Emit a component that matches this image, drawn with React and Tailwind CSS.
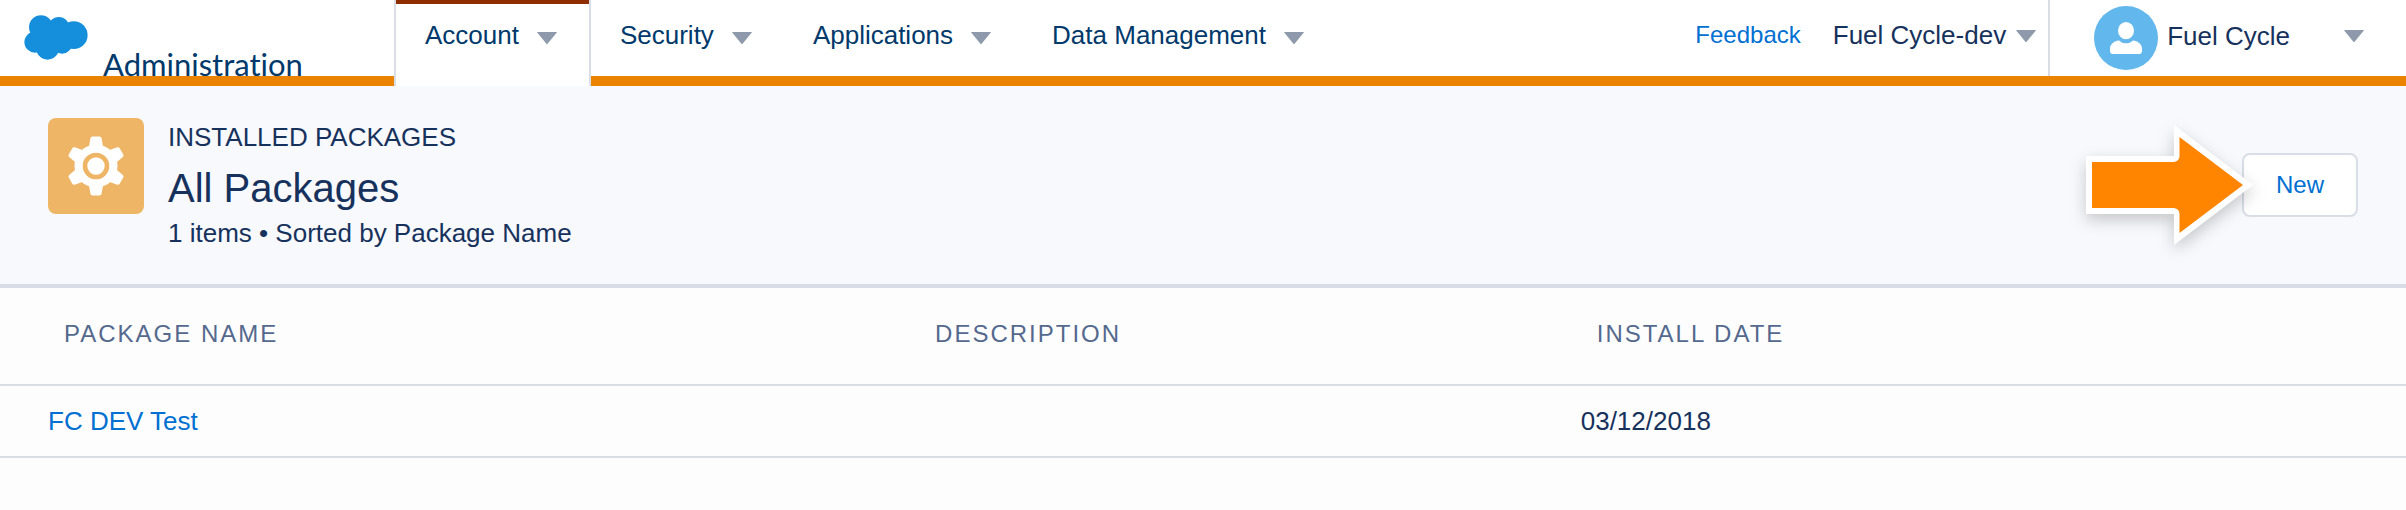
import React from "react";

const navItems = ["Account", "Security", "Applications", "Data Management"];

const packages = [
  { name: "FC DEV Test", description: "", installed: "03/12/2018" },
];

function Caret({ className = "" }) {
  return (
    <svg
      aria-hidden="true"
      viewBox="0 0 20 12"
      className={`h-3 w-5 shrink-0 fill-[#8e9aab] ${className}`}
    >
      <path d="M0 0.3Q0 0 0.4 0H19.6Q20 0 20 0.3L10.6 11.7Q10 12.2 9.4 11.7Z" />
    </svg>
  );
}

function CloudLogo() {
  return (
    <svg
      role="img"
      aria-label="Cloud"
      viewBox="72 45 193 136"
      className="mt-[15px] h-[45px] w-16 shrink-0 fill-[#158fdc]"
    >
      <circle cx="123" cy="82" r="36" />
      <circle cx="177" cy="83" r="32" />
      <circle cx="222" cy="106" r="42" />
      <circle cx="187" cy="132" r="30" />
      <circle cx="143" cy="146" r="34" />
      <circle cx="105" cy="127" r="32" />
      <path d="M105 75H210V140H105Z" />
    </svg>
  );
}

function Avatar() {
  return (
    <svg aria-hidden="true" viewBox="0 0 192 192" className="size-16 shrink-0">
      <circle cx="96" cy="96" r="96" fill="#62b7ed" />
      <ellipse cx="96" cy="74" rx="24" ry="26" fill="#fff" />
      <path
        fill="#fff"
        d="M70 104C74 103 77 105 80 107C90 113 102 113 112 107C115 105 118 103 122 104C134 107 144 116 144 127V134Q144 144 134 144H58Q48 144 48 134V127C48 116 58 107 70 104Z"
      />
    </svg>
  );
}

function GearTile() {
  return (
    <div className="flex size-24 shrink-0 items-center justify-center rounded-lg bg-[#eeb566]">
      <svg aria-hidden="true" viewBox="-30 -30 60 60" className="size-[60px]">
        <g fill="#fff" stroke="#fff" strokeWidth="4" strokeLinejoin="round">
          {[0, 60, 120, 180, 240, 300].map((angle) => (
            <path
              key={angle}
              transform={`rotate(${angle})`}
              d="M-3.6 -27.4H3.6L5.6 -16H-5.6Z"
            />
          ))}
        </g>
        <circle r="21.5" fill="#fff" />
        <circle r="11" fill="#fff" stroke="#eeb566" strokeWidth="4.6" />
      </svg>
    </div>
  );
}

function PointerArrow() {
  return (
    <svg
      aria-hidden="true"
      viewBox="0 0 200 155"
      className="pointer-events-none absolute -top-[43px] -left-[172px] h-[155px] w-[200px] overflow-visible drop-shadow-[0_6px_8px_rgba(0,0,0,0.2)]"
    >
      <path fill="#fff" d="M16 46H104V15L183 75L104 135V104H16Z" />
      <path
        fill="#ff8400"
        d="M22 52H104Q109.500 51 109.500 46V27L173 75L109.500 123V104Q109.500 99 104 98H22Z"
      />
    </svg>
  );
}

function NavItem({ label, active }) {
  return (
    <button
      type="button"
      className={
        active
          ? "flex items-center gap-[18px] border-x-2 border-[#d8dde6] pr-8 pb-4 pl-[29px] shadow-[inset_0_4px_0_#8e2e00]"
          : "flex items-center gap-[18px] border-b-[10px] border-[#ea8400] pr-8 pb-1.5 pl-[29px]"
      }
    >
      <span className="whitespace-nowrap">{label}</span>
      <Caret className="mt-1.5" />
    </button>
  );
}

function TopBar() {
  return (
    <header className="flex h-[86px] items-stretch bg-white text-[26px] leading-8 text-[#16325c]">
      <div className="flex w-[394px] shrink-0 gap-[15px] border-b-[10px] border-[#ea8400] pl-6">
        <CloudLogo />
        <span className="self-end font-[Lato,sans-serif] text-[31px] leading-6 text-[#00396b] [font-variant-ligatures:none]">
          Administration
        </span>
      </div>
      <nav className="flex text-[#00396b]">
        {navItems.map((label, i) => (
          <NavItem key={label} label={label} active={i === 0} />
        ))}
      </nav>
      <div className="flex flex-1 justify-end border-b-[10px] border-[#ea8400]">
        <div className="flex items-center gap-8 pr-3 pb-1.5">
          <a href="#feedback" className="text-2xl leading-8 text-[#0070d2]">
            Feedback
          </a>
          <button type="button" className="flex items-center gap-2.5">
            <span className="whitespace-nowrap">Fuel Cycle-dev</span>
            <Caret className="mt-0.5" />
          </button>
        </div>
        <div className="w-0.5 bg-[#d8dde6]" />
        <button type="button" className="flex items-center pr-[42px] pl-11">
          <Avatar />
          <span className="mr-[54px] ml-[9px] pb-1 whitespace-nowrap">Fuel Cycle</span>
          <Caret className="mb-1" />
        </button>
      </div>
    </header>
  );
}

function PageHeader() {
  return (
    <section className="flex items-start gap-6 border-b-4 border-[#d8dde6] bg-[#f8f9fc] px-12 pt-8 pb-[35px] text-[#16325c]">
      <GearTile />
      <div className="flex-1 pt-[3px]">
        <p className="text-[26px] leading-8">INSTALLED PACKAGES</p>
        <h1 className="pt-1.5 text-[40px] leading-[58px]">All Packages</h1>
        <p className="text-[26px] leading-8">1 items • Sorted by Package Name</p>
      </div>
      <div className="relative mt-[35px]">
        <button
          type="button"
          className="h-16 rounded-lg border-2 border-[#d8dde6] bg-white px-8 text-2xl leading-8 text-[#0070d2]"
        >
          New
        </button>
        <PointerArrow />
      </div>
    </section>
  );
}

function PackageTable() {
  const head =
    "h-[98px] border-b-2 border-[#d8dde6] pb-1 text-2xl leading-8 font-normal tracking-[2px] text-[#54698d]";
  const cell = "h-[72px] border-b-2 border-[#d8dde6] text-[26px] leading-8";
  return (
    <table className="w-full table-fixed border-separate border-spacing-0 text-left text-[#16325c]">
      <colgroup>
        <col className="w-[38.2%]" />
        <col className="w-[27.5%]" />
        <col />
      </colgroup>
      <thead>
        <tr>
          <th scope="col" className={`${head} pl-16`}>PACKAGE NAME</th>
          <th scope="col" className={`${head} pl-4`}>DESCRIPTION</th>
          <th scope="col" className={`${head} pl-4`}>INSTALL DATE</th>
        </tr>
      </thead>
      <tbody>
        {packages.map((item) => (
          <tr key={item.name}>
            <td className={`${cell} pl-12`}>
              <a href="#package" className="text-[#0070d2]">{item.name}</a>
            </td>
            <td className={cell}>{item.description}</td>
            <td className={cell}>{item.installed}</td>
          </tr>
        ))}
      </tbody>
    </table>
  );
}

export default function App() {
  return (
    <div className="min-h-screen bg-[#fdfdfd] font-['Liberation_Sans',Arial,sans-serif]">
      <TopBar />
      <main>
        <PageHeader />
        <PackageTable />
      </main>
    </div>
  );
}
